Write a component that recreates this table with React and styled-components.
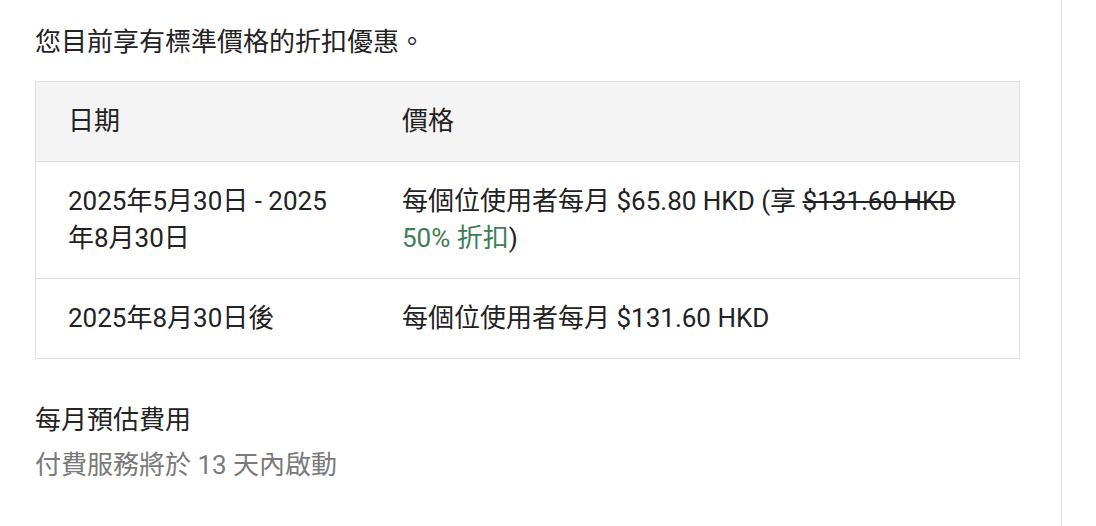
import React from 'react';
import styled, { createGlobalStyle } from 'styled-components';

const GlobalStyle = createGlobalStyle`
  body {
    margin: 0;
    background: #ffffff;
    font-family: Roboto, "Noto Sans CJK TC", sans-serif;
  }
`;

const Page = styled.div`
  display: flex;
  min-height: 526px;
`;

const Main = styled.div`
  width: 1062px;
  box-sizing: border-box;
  border-right: 1px solid #e3e3e3;
  padding: 24px 42px 0 35px;
  color: #222222;
  font-size: 26px;
  line-height: 37px;
`;

const Intro = styled.p`
  margin: 0 0 20px;
`;

const Table = styled.table`
  width: 985px;
  border-collapse: collapse;
  border: 1px solid #e0e0e0;
`;

const HeadCell = styled.th`
  text-align: left;
  font-weight: 400;
  background: #f4f4f4;
  padding: 21px 32px;
  border-bottom: 1px solid #e0e0e0;
  width: ${(p) => p.$width || 'auto'};
`;

const Cell = styled.td`
  padding: 21px 32px;
  border-bottom: 1px solid #e0e0e0;
  vertical-align: top;
`;

const Struck = styled.span`
  text-decoration: line-through;
`;

const Discount = styled.span`
  color: #3e7d57;
`;

const Summary = styled.div`
  margin-top: 43px;
`;

const Title = styled.div``;

const Note = styled.div`
  color: #7a7a7a;
  margin-top: 8px;
`;

const rows = [
  {
    date: '2025年5月30日 - 2025年8月30日',
    price: (
      <>
        每個位使用者每月 $65.80 HKD (享 <Struck>$131.60 HKD</Struck>{' '}
        <Discount>50% 折扣</Discount>)
      </>
    ),
  },
  { date: '2025年8月30日後', price: '每個位使用者每月 $131.60 HKD' },
];

export default function App() {
  return (
    <Page>
      <GlobalStyle />
      <Main>
        <Intro>您目前享有標準價格的折扣優惠。</Intro>
        <Table>
          <thead>
            <tr>
              <HeadCell $width="270px">日期</HeadCell>
              <HeadCell>價格</HeadCell>
            </tr>
          </thead>
          <tbody>
            {rows.map((row) => (
              <tr key={row.date}>
                <Cell>{row.date}</Cell>
                <Cell>{row.price}</Cell>
              </tr>
            ))}
          </tbody>
        </Table>
        <Summary>
          <Title>每月預估費用</Title>
          <Note>付費服務將於 13 天內啟動</Note>
        </Summary>
      </Main>
    </Page>
  );
}
